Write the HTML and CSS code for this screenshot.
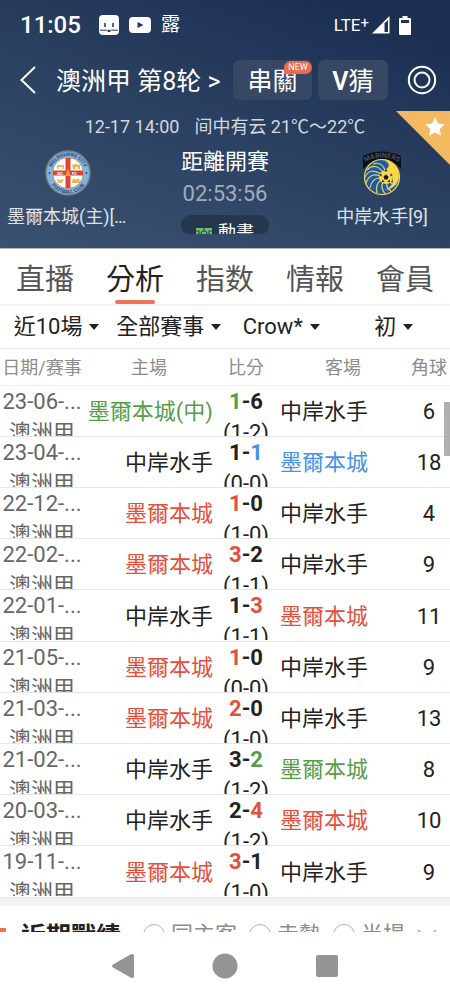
FILE: index.html
```html
<!DOCTYPE html>
<html lang="zh-Hant">
<head>
<meta charset="utf-8">
<meta name="viewport" content="width=device-width, initial-scale=1">
<title>澳洲甲 第8轮</title>
<link rel="stylesheet" href="styles.css">
</head>
<body>
<div class="app">
  <header class="hero">
    <div class="status">
      <span class="clock">11:05</span>
      <svg class="face" width="20" height="20" viewBox="0 0 20 20"><rect width="20" height="20" rx="4" fill="#fff"/><path d="M6 8v4M14 8v4" stroke="#243b60" stroke-width="1.6"/><path d="M1 15.2h6.500q1 1.300 2.500 1.300t2.500-1.300H19" fill="none" stroke="#243b60" stroke-width="1"/><path d="M8.500 14.800h3L10 17.500z" fill="#243b60"/></svg>
      <svg class="tube" width="22" height="16" viewBox="0 0 22 16"><rect width="22" height="16" rx="4" fill="#fff"/><path d="M8.500 5v6l6-3z" fill="#22385c"/></svg>
      <span class="note">露</span>
      <span class="net">LTE<sup>+</sup></span>
      <svg class="signal" width="18" height="18" viewBox="0 0 18 18"><path d="M0 17.500 17.500 0v17.500z" fill="#fff"/><path d="M12.500 7.300 16 4v12h-3.500z" fill="#1e3255"/></svg>
      <svg class="battery" width="12" height="19" viewBox="0 0 12 19"><path d="M3.500 0h5v2H11q1 0 1 1v15q0 1-1 1H1q-1 0-1-1V3q0-1 1-1h2.500z" fill="#fff"/><path d="M2 4h8v3H2z" fill="#1e3255"/></svg>
    </div>

    <div class="topbar">
      <button class="icon-btn" aria-label="返回"><svg width="16" height="28" viewBox="0 0 16 28"><path d="M15 1 1.500 14 15 27" fill="none" stroke="#fff" stroke-width="2"/></svg></button>
      <h1 class="league">澳洲甲 第8轮 &gt;</h1>
      <button class="chip chip-wide">串關<span class="new">NEW</span></button>
      <button class="chip"><b>V</b>猜</button>
      <button class="icon-btn target" aria-label="設定"><svg width="30" height="30" viewBox="0 0 30 30" fill="none" stroke="#fff" stroke-width="2"><circle cx="15" cy="15" r="13.200"/><circle cx="15" cy="15" r="7.500"/></svg></button>
    </div>

    <p class="meta"><span>12-17 14:00</span><span>间中有云 21℃～22℃</span></p>

    <div class="match">
      <div class="team">
        <svg width="46" height="46" viewBox="0 0 46 46">
          <circle cx="23" cy="23" r="22" fill="#7fb2de" stroke="#7d817c" stroke-width="1.500"/>
          <circle cx="23" cy="23" r="15.500" fill="#fff" stroke="#b99a62"/>
          <path d="M20.500 8h5v30h-5zM8 20.500h30v5H8z" fill="#dd4336"/>
          <path d="M12 15h7v4h-1.500v-2h-4v2H12zM27 15l3-1 5 1v4h-2v-2h-3v2h-2zM12 29l3 1 4-1-2 4h-4zM27 31l2-3 2 2 2-2 2 3v2h-8z" fill="#efb35a"/>
          <path d="m23 19 3 7h-6z" fill="#e8a33d"/>
          <text x="12" y="25" class="badge-cross">MC</text><text x="27" y="25" class="badge-cross">FC</text>
          <circle cx="4.500" cy="23" r="1" fill="#254a82"/><circle cx="41.500" cy="23" r="1" fill="#254a82"/>
          <path id="arcTop" d="M6 23a17 17 0 0 1 34 0" fill="none"/><path id="arcBottom" d="M2.500 23a20.500 20.500 0 0 0 41 0" fill="none"/>
          <text class="badge-ring"><textPath href="#arcTop" startOffset="50%" text-anchor="middle">MELBOURNE CITY</textPath></text>
          <text class="badge-ring"><textPath href="#arcBottom" startOffset="50%" text-anchor="middle">FOOTBALL CLUB</textPath></text>
        </svg>
        <span class="team-name">墨爾本城(主)[13]</span>
      </div>
      <div class="countdown">
        <span class="label">距離開賽</span>
        <time class="timer">02:53:56</time>
        <div class="pill-clip"><button class="pill"><svg width="16" height="13" viewBox="0 0 16 13"><path d="M0 1h16v12H0z" fill="#70bd6a"/><path d="M8 1v3M0 4h3v6H0M16 4h-3v6h3" fill="none" stroke="#294b50" stroke-width="1.200"/><circle cx="8" cy="7" r="3" fill="none" stroke="#294b50" stroke-width="1.200"/></svg>動畫</button></div>
      </div>
      <div class="team">
        <svg width="46" height="46" viewBox="0 0 46 46">
          <path d="M4 19V6Q23-3 42 6v13l-5-5Q23 4 9 14z" fill="#0a0d14"/>
          <path id="arcMar" d="M5 13Q23 2 41 13" fill="none"/>
          <text class="badge-mar"><textPath href="#arcMar" startOffset="50%" text-anchor="middle">MARINERS</textPath></text>
          <circle cx="23" cy="27" r="17.500" fill="#2258a6" stroke="#f4d94b" stroke-width="1.200"/>
          <path d="M22 10q17 0 18 16-1 12-14 14 9-4 8-12-1-8-10-6 8-5 5-9-3-3-7-3z" fill="#f8d745"/>
          <path d="M24 22Q16 12 8 20M22 24Q11 17 6 27M21 26Q11 22 7 33M21 28Q13 28 11 38M22 30Q16 34 18 43M24 32Q21 37 26 44M26 20Q22 11 14 14M28 33q-1 5 4 8M31 31q1 4 6 3" fill="none" stroke="#e6d554" stroke-width="1.200"/>
          <circle cx="27" cy="27" r="7" fill="#f8d745"/>
          <path d="m27 24.500 2.500 2-1 3h-3l-1-3zM25.500 20h3L27 22zM20.500 25l2-1.500v3zM33.500 25l-2-1.500v3zM23 32l.5-2.500L25.500 32zM31 32l-.5-2.500L28.500 32z" fill="#111b25"/>
        </svg>
        <span class="team-name">中岸水手[9]</span>
      </div>
    </div>
    <button class="favorite" aria-label="收藏"><svg width="54" height="54" viewBox="0 0 54 54"><path d="M0 0h54v54z" fill="#f4b860"/><path d="m39 6 2.900 6.400 7 .8-5.200 4.700 1.400 6.900L39 21.400l-6.100 3.400 1.400-6.900-5.200-4.700 7-.8z" fill="#fff"/></svg></button>
  </header>

  <nav class="tabs">
    <a href="#live">直播</a>
    <a href="#analysis" class="active">分析</a>
    <a href="#odds">指数</a>
    <a href="#news">情報</a>
    <a href="#vip">會員</a>
  </nav>

  <main class="content">
    <div class="filters">
      <label class="filter"><select aria-label="場數"><option>近10場</option></select></label>
      <label class="filter"><select aria-label="賽事"><option>全部賽事</option></select></label>
      <label class="filter"><select aria-label="公司"><option>Crow*</option></select></label>
      <label class="filter"><select aria-label="盤口"><option>初</option></select></label>
    </div>

    <table class="games">
      <thead>
        <tr><th class="c-date">日期/赛事</th><th>主場</th><th class="c-score">比分</th><th>客場</th><th class="c-corner">角球</th></tr>
      </thead>
      <tbody>
        <tr><td><div class="clip date">23-06-...<br>澳洲甲</div></td><td class="home green">墨爾本城(中)</td><td><div class="clip"><b><i class="green">1</i>-6</b><br>(1-2)</div></td><td class="away">中岸水手</td><td class="corner">6</td></tr>
        <tr><td><div class="clip date">23-04-...<br>澳洲甲</div></td><td class="home">中岸水手</td><td><div class="clip"><b>1-<i class="blue">1</i></b><br>(0-0)</div></td><td class="away blue">墨爾本城</td><td class="corner">18</td></tr>
        <tr><td><div class="clip date">22-12-...<br>澳洲甲</div></td><td class="home red">墨爾本城</td><td><div class="clip"><b><i class="red">1</i>-0</b><br>(1-0)</div></td><td class="away">中岸水手</td><td class="corner">4</td></tr>
        <tr><td><div class="clip date">22-02-...<br>澳洲甲</div></td><td class="home red">墨爾本城</td><td><div class="clip"><b><i class="red">3</i>-2</b><br>(1-1)</div></td><td class="away">中岸水手</td><td class="corner">9</td></tr>
        <tr><td><div class="clip date">22-01-...<br>澳洲甲</div></td><td class="home">中岸水手</td><td><div class="clip"><b>1-<i class="red">3</i></b><br>(1-1)</div></td><td class="away red">墨爾本城</td><td class="corner">11</td></tr>
        <tr><td><div class="clip date">21-05-...<br>澳洲甲</div></td><td class="home red">墨爾本城</td><td><div class="clip"><b><i class="red">1</i>-0</b><br>(0-0)</div></td><td class="away">中岸水手</td><td class="corner">9</td></tr>
        <tr><td><div class="clip date">21-03-...<br>澳洲甲</div></td><td class="home red">墨爾本城</td><td><div class="clip"><b><i class="red">2</i>-0</b><br>(1-0)</div></td><td class="away">中岸水手</td><td class="corner">13</td></tr>
        <tr><td><div class="clip date">21-02-...<br>澳洲甲</div></td><td class="home">中岸水手</td><td><div class="clip"><b>3-<i class="green">2</i></b><br>(1-2)</div></td><td class="away green">墨爾本城</td><td class="corner">8</td></tr>
        <tr><td><div class="clip date">20-03-...<br>澳洲甲</div></td><td class="home">中岸水手</td><td><div class="clip"><b>2-<i class="red">4</i></b><br>(1-2)</div></td><td class="away red">墨爾本城</td><td class="corner">10</td></tr>
        <tr><td><div class="clip date">19-11-...<br>澳洲甲</div></td><td class="home red">墨爾本城</td><td><div class="clip"><b><i class="red">3</i>-1</b><br>(1-0)</div></td><td class="away">中岸水手</td><td class="corner">9</td></tr>
      </tbody>
    </table>

    <section class="recent">
      <h2>近期戰績</h2>
      <label><input type="radio" name="scope">同主客</label>
      <label><input type="radio" name="scope">走勢</label>
      <label><input type="radio" name="scope">半場</label>
      <svg class="chevron" width="20" height="12" viewBox="0 0 20 12"><path d="m1 1 9 9 9-9" fill="none" stroke="#aaa" stroke-width="1.500"/></svg>
    </section>
    <div class="scrollbar"></div>
  </main>

  <footer class="system-nav">
    <button class="icon-btn" aria-label="返回"><svg width="24" height="26" viewBox="0 0 24 26"><path d="M2 11.500 19.500 1.500Q23 0 23 3v20q0 3-3.500 1.500L2 14.500q-2-1.500 0-3z" fill="#949494"/></svg></button>
    <button class="icon-btn" aria-label="主畫面"><svg width="26" height="26"><circle cx="13" cy="13" r="12.500" fill="#949494"/></svg></button>
    <button class="icon-btn" aria-label="最近使用"><svg width="22" height="22"><rect width="22" height="22" rx="2" fill="#949494"/></svg></button>
  </footer>
</div>
</body>
</html>
```
FILE: styles.css
```css
* { box-sizing: border-box; }

body {
  margin: 0;
  font-family: Roboto, "Noto Sans CJK TC", sans-serif;
  color: #222;
  background: #fff;
}

button, select, input { font: inherit; color: inherit; }
button { border: 0; padding: 0; background: none; }
svg { display: block; }

.app {
  display: flex;
  flex-direction: column;
  height: 100vh;
  overflow: hidden;
}

/* Header */
.hero {
  position: relative;
  flex: none;
  color: #fff;
  background: linear-gradient(200deg, #1b2f53 10%, #2a4060 50%, #3a5272 100%);
  border-bottom: 1px solid #aeb8c8;
}

.status {
  display: flex;
  align-items: center;
  height: 50px;
  padding: 0 39px 0 20px;
}
.clock { font-size: 24px; font-weight: 500; width: 79px; }
.tube { margin-left: 10px; }
.note { margin-left: 10px; font-size: 19px; line-height: 24px; }
.net { margin-left: auto; font-size: 17px; line-height: 24px; }
.net sup { font-size: 15px; line-height: 0; vertical-align: 3px; }
.signal { margin-left: 3px; }
.battery { margin-left: 9px; }

.topbar {
  display: flex;
  align-items: center;
  height: 60px;
  padding: 0 13px 0 20px;
}
.league {
  flex: 1;
  margin: 0 0 0 20px;
  padding-top: 4px;
  font-size: 25px;
  line-height: 36px;
  font-weight: 400;
  white-space: nowrap;
}
.chip {
  position: relative;
  width: 70px;
  height: 40px;
  padding-top: 4px;
  margin-right: 6px;
  border-radius: 6px;
  background: #364863;
  font-size: 25px;
  line-height: 36px;
  white-space: nowrap;
}
.chip-wide { width: 79px; }
.chip b { font-weight: 600; }
.new {
  position: absolute;
  top: 1px;
  right: 0;
  width: 28px;
  border-radius: 7px 7px 7px 0;
  background: #eb6b52;
  font-size: 9px;
  line-height: 13px;
}
.target { margin-left: 13px; }

.meta {
  display: flex;
  justify-content: center;
  gap: 15px;
  margin: 0;
  font-size: 18px;
  line-height: 34px;
  color: #d3d8df;
}

.match {
  display: grid;
  grid-template-columns: 1fr 90px 1fr;
  height: 104px;
}
.team {
  display: flex;
  flex-direction: column;
  align-items: center;
  padding: 6px 50px 0 6px;
  gap: 6px;
}
.team:last-child { padding: 6px 0 0 44px; }
.team-name {
  width: 122px;
  overflow: hidden;
  text-overflow: ellipsis;
  white-space: nowrap;
  text-align: center;
  font-size: 18px;
  line-height: 30px;
  color: #dfe3e9;
}
.badge-cross { font: bold 4px Roboto, sans-serif; fill: #fff; }
.badge-ring { font: bold 5px Roboto, sans-serif; fill: #254a82; }
.badge-mar { font: bold 7px Roboto, sans-serif; fill: #4a5262; }

.countdown {
  display: flex;
  flex-direction: column;
  align-items: center;
}
.label { font-size: 22px; line-height: 36px; }
.timer { font-size: 22px; line-height: 28px; color: #a3adba; }
.pill-clip {
  margin-top: 7px;
  height: 19px;
  overflow: hidden;
  border-radius: 0 0 8px 8px;
}
.pill {
  display: flex;
  align-items: center;
  justify-content: center;
  gap: 6px;
  width: 88px;
  height: 36px;
  border-radius: 10px;
  background: #25364f;
  font-size: 18px;
  line-height: 36px;
}

.favorite {
  position: absolute;
  top: 111px;
  right: 0;
}

/* Tabs */
.tabs {
  flex: none;
  display: grid;
  grid-template-columns: repeat(5, 1fr);
  border-bottom: 2px solid #f3f3f3;
}
.tabs a {
  position: relative;
  padding-top: 7px;
  text-align: center;
  text-decoration: none;
  color: #555;
  font-size: 29px;
  line-height: 48px;
}
.tabs .active { color: #222; }
.tabs .active::after {
  content: "";
  position: absolute;
  left: 50%;
  bottom: 0;
  width: 40px;
  height: 4px;
  margin-left: -20px;
  border-radius: 2px;
  background: #ee7357;
}

/* Content */
.content {
  position: relative;
  flex: 1;
  min-height: 0;
  overflow: hidden;
}

.filters {
  display: grid;
  grid-template-columns: repeat(4, 1fr);
  border-bottom: 1px solid #eaeaea;
}
.filter {
  display: flex;
  align-items: center;
  justify-content: center;
  gap: 6px;
  height: 42px;
}
.filter::after {
  content: "";
  border: 5px solid transparent;
  border-top: 6px solid #222;
  border-bottom: 0;
}
.filter select {
  appearance: none;
  border: 0;
  padding: 0;
  background: none;
  font-size: 22px;
  line-height: 32px;
}

.games {
  width: 100%;
  table-layout: fixed;
  border-collapse: collapse;
  font-size: 22px;
  line-height: 31px;
}
.games th {
  height: 36px;
  padding: 2px 0 0;
  font-size: 18px;
  font-weight: 400;
  color: #8c8c8c;
  white-space: nowrap;
  border-bottom: 1px solid #eee;
}
.c-date { width: 84px; }
.c-score { width: 64px; }
.c-corner { width: 42px; }
.games td {
  height: 51px;
  padding: 0;
  text-align: center;
  white-space: nowrap;
  border-bottom: 1px solid #e6e6e6;
}
.games tr:nth-child(5n) td { height: 52px; }
.games i { font-style: normal; }
.games .home { text-align: right; padding: 2px 1px 0 0; }
.games .away { text-align: left; padding: 2px 0 0 2px; }
.games .corner { padding-top: 2px; }
.clip { height: 50px; overflow: hidden; }
.date { color: #666; }
.games .green { color: #579c4a; }
.games .blue { color: #4791e8; }
.games .red { color: #e34f3d; }

.recent {
  display: flex;
  align-items: center;
  height: 66px;
  border-top: 8px solid #f3f3f3;
  font-size: 22px;
  line-height: 32px;
  color: #8c8c8c;
  white-space: nowrap;
}
.recent::before {
  content: "";
  width: 6px;
  height: 14px;
  background: #ee7357;
}
.recent h2 {
  margin: 0 22px 0 15px;
  padding-top: 4px;
  font-size: 25px;
  font-weight: 700;
  color: #222;
}
.recent label {
  display: flex;
  align-items: center;
  gap: 6px;
  margin-right: 12px;
}
.recent input {
  appearance: none;
  width: 22px;
  height: 22px;
  margin: 0;
  border: 1px solid #b5b5b5;
  border-radius: 50%;
}

.scrollbar {
  position: absolute;
  top: 96px;
  right: 0;
  width: 6px;
  height: 54px;
  background: #b0b0b0;
}

.system-nav {
  flex: none;
  display: grid;
  grid-template-columns: repeat(3, 102px);
  justify-content: center;
  align-items: center;
  height: 68px;
}
.system-nav .icon-btn { justify-self: center; }
```
